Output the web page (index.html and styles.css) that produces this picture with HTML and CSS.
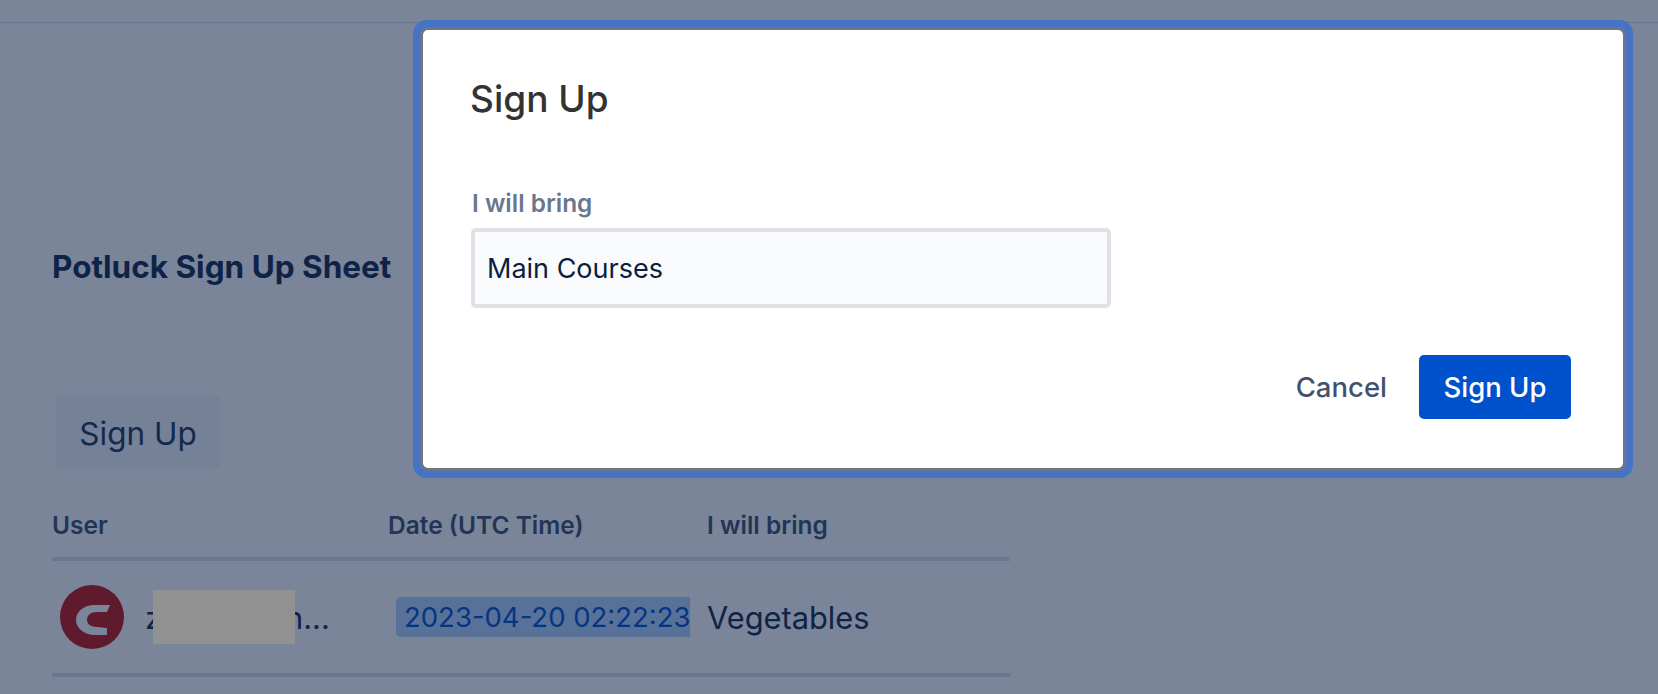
FILE: index.html
```html
<!DOCTYPE html>
<html lang="en">
<head>
    <meta charset="UTF-8">
    <title>Potluck Sign Up Sheet</title>
    <link rel="stylesheet" href="styles.css">
</head>
<body>
    <div class="topbar"></div>

    <div class="page">
        <h2 class="sheet-title">Potluck Sign Up Sheet</h2>
        <button class="open-btn">Sign Up</button>

        <div class="sheet-table">
            <div class="head-row">
                <div class="head-user">User</div>
                <div class="head-date">Date (UTC Time)</div>
                <div>I will bring</div>
            </div>
            <div class="body-row">
                <div class="user-cell">
                    <svg class="avatar" viewBox="0 0 64 64">
                        <circle cx="32" cy="32" r="32" fill="#c51616"/>
                        <path d="M50 20H35C23 20 16 27 16 35C16 43 24 50 35 50H47V43L37 42C31 42 27 39 27 35C27 30 31 27 37 27H47Z" fill="#fff"/>
                    </svg>
                    <div class="user-name">
                        <span>z</span>
                        <span class="redact"></span>
                        <span>n...</span>
                    </div>
                </div>
                <div class="date-cell"><a href="#" class="date-link">2023-04-20 02:22:23</a></div>
                <div>Vegetables</div>
            </div>
        </div>
    </div>

    <div class="blanket"></div>

    <div class="modal">
        <h1 class="modal-title">Sign Up</h1>
        <label class="field-label">I will bring</label>
        <input class="field-input" type="text" value="Main Courses">
        <div class="modal-actions">
            <button class="cancel-btn">Cancel</button>
            <button class="submit-btn">Sign Up</button>
        </div>
    </div>
</body>
</html>
```

FILE: styles.css
```css
/* page under the blanket */
html, body {
    height: 100%;
}
body {
    margin: 0;
    padding: 0;
    background-color: #fff;
    font-family: Inter, "Liberation Sans", sans-serif;
    color: #172b4d;
    overflow: hidden;
}
.topbar {
    height: 22px;
    border-bottom: 1px solid #dfe1e6;
}
.page {
    padding-left: 52px;
}
.sheet-title {
    margin: 222px 0 0;
    font-size: 31.5px;
    line-height: 44px;
    font-weight: 700;
}
.open-btn {
    display: block;
    margin: 106px 0 0 4px;
    width: 164px;
    height: 73px;
    padding: 3px 0 0;
    border: none;
    border-radius: 5px;
    background-color: rgba(9, 30, 66, 0.04);
    color: #253858;
    font-family: inherit;
    font-size: 31.5px;
}
.sheet-table {
    width: 958px;
    margin-top: 36px;
}
.head-row, .body-row {
    display: grid;
    grid-template-columns: 336px 319px 303px;
}
.head-row {
    height: 47px;
    padding-top: 6px;
    color: #42526e;
    font-size: 24.5px;
    font-weight: 600;
    border-bottom: 4px solid #dfe1e6;
}
.body-row {
    height: 112px;
    align-items: center;
    font-size: 30.8px;
    border-bottom: 4px solid #dfe1e6;
}
.user-cell {
    display: flex;
    align-items: center;
    padding-left: 8px;
}
.avatar {
    width: 64px;
    height: 64px;
}
.user-name {
    display: flex;
    align-items: center;
    margin-left: 21px;
}
.redact {
    width: 142px;
    height: 54px;
    margin-left: -9px;
    margin-right: -10px;
    background-color: #919191;
    position: relative;
    z-index: 1;
}
.date-cell {
    padding-left: 8px;
}
.date-link {
    display: inline-block;
    padding-left: 8px;
    line-height: 40px;
    border-radius: 5px 0 0 5px;
    background-color: #b3d4ff;
    color: #0052cc;
    text-decoration: none;
    font-size: 27.5px;
    white-space: nowrap;
}

/* blanket and dialog */
.blanket {
    position: absolute;
    top: 0;
    left: 0;
    width: 100%;
    height: 100%;
    background-color: rgba(9, 30, 66, 0.54);
}
.modal {
    position: absolute;
    top: 30px;
    left: 423px;
    width: 1200px;
    height: 438px;
    box-sizing: border-box;
    padding: 45px 49px 0;
    background-color: #fff;
    border-radius: 5px;
    box-shadow: 0 0 0 3px #6c7589, 0 0 0 10px #4573c6;
}
.modal-title {
    margin: 0 0 0 -2px;
    font-size: 37px;
    line-height: 48px;
    font-weight: 500;
    color: #333;
}
.field-label {
    display: block;
    margin-top: 66px;
    font-size: 24.4px;
    line-height: 28px;
    font-weight: 600;
    color: #6b778c;
}
.field-input {
    display: block;
    box-sizing: border-box;
    width: 640px;
    height: 80px;
    margin: 11px 0 0 -1px;
    padding: 0 12px;
    border: 4px solid #dfe1e6;
    border-radius: 5px;
    background-color: #fafbfc;
    color: #091e42;
    font-family: inherit;
    font-size: 27px;
}
.modal-actions {
    display: flex;
    justify-content: flex-end;
    align-items: center;
    gap: 32px;
    margin-top: 47px;
    margin-right: 3px;
}
.cancel-btn, .submit-btn {
    border: none;
    font-family: inherit;
    font-size: 27.5px;
    font-weight: 500;
}
.cancel-btn {
    background: none;
    padding: 0;
    color: #42526e;
}
.submit-btn {
    width: 152px;
    height: 64px;
    border-radius: 5px;
    background-color: #0052cc;
    color: #fff;
}
```
